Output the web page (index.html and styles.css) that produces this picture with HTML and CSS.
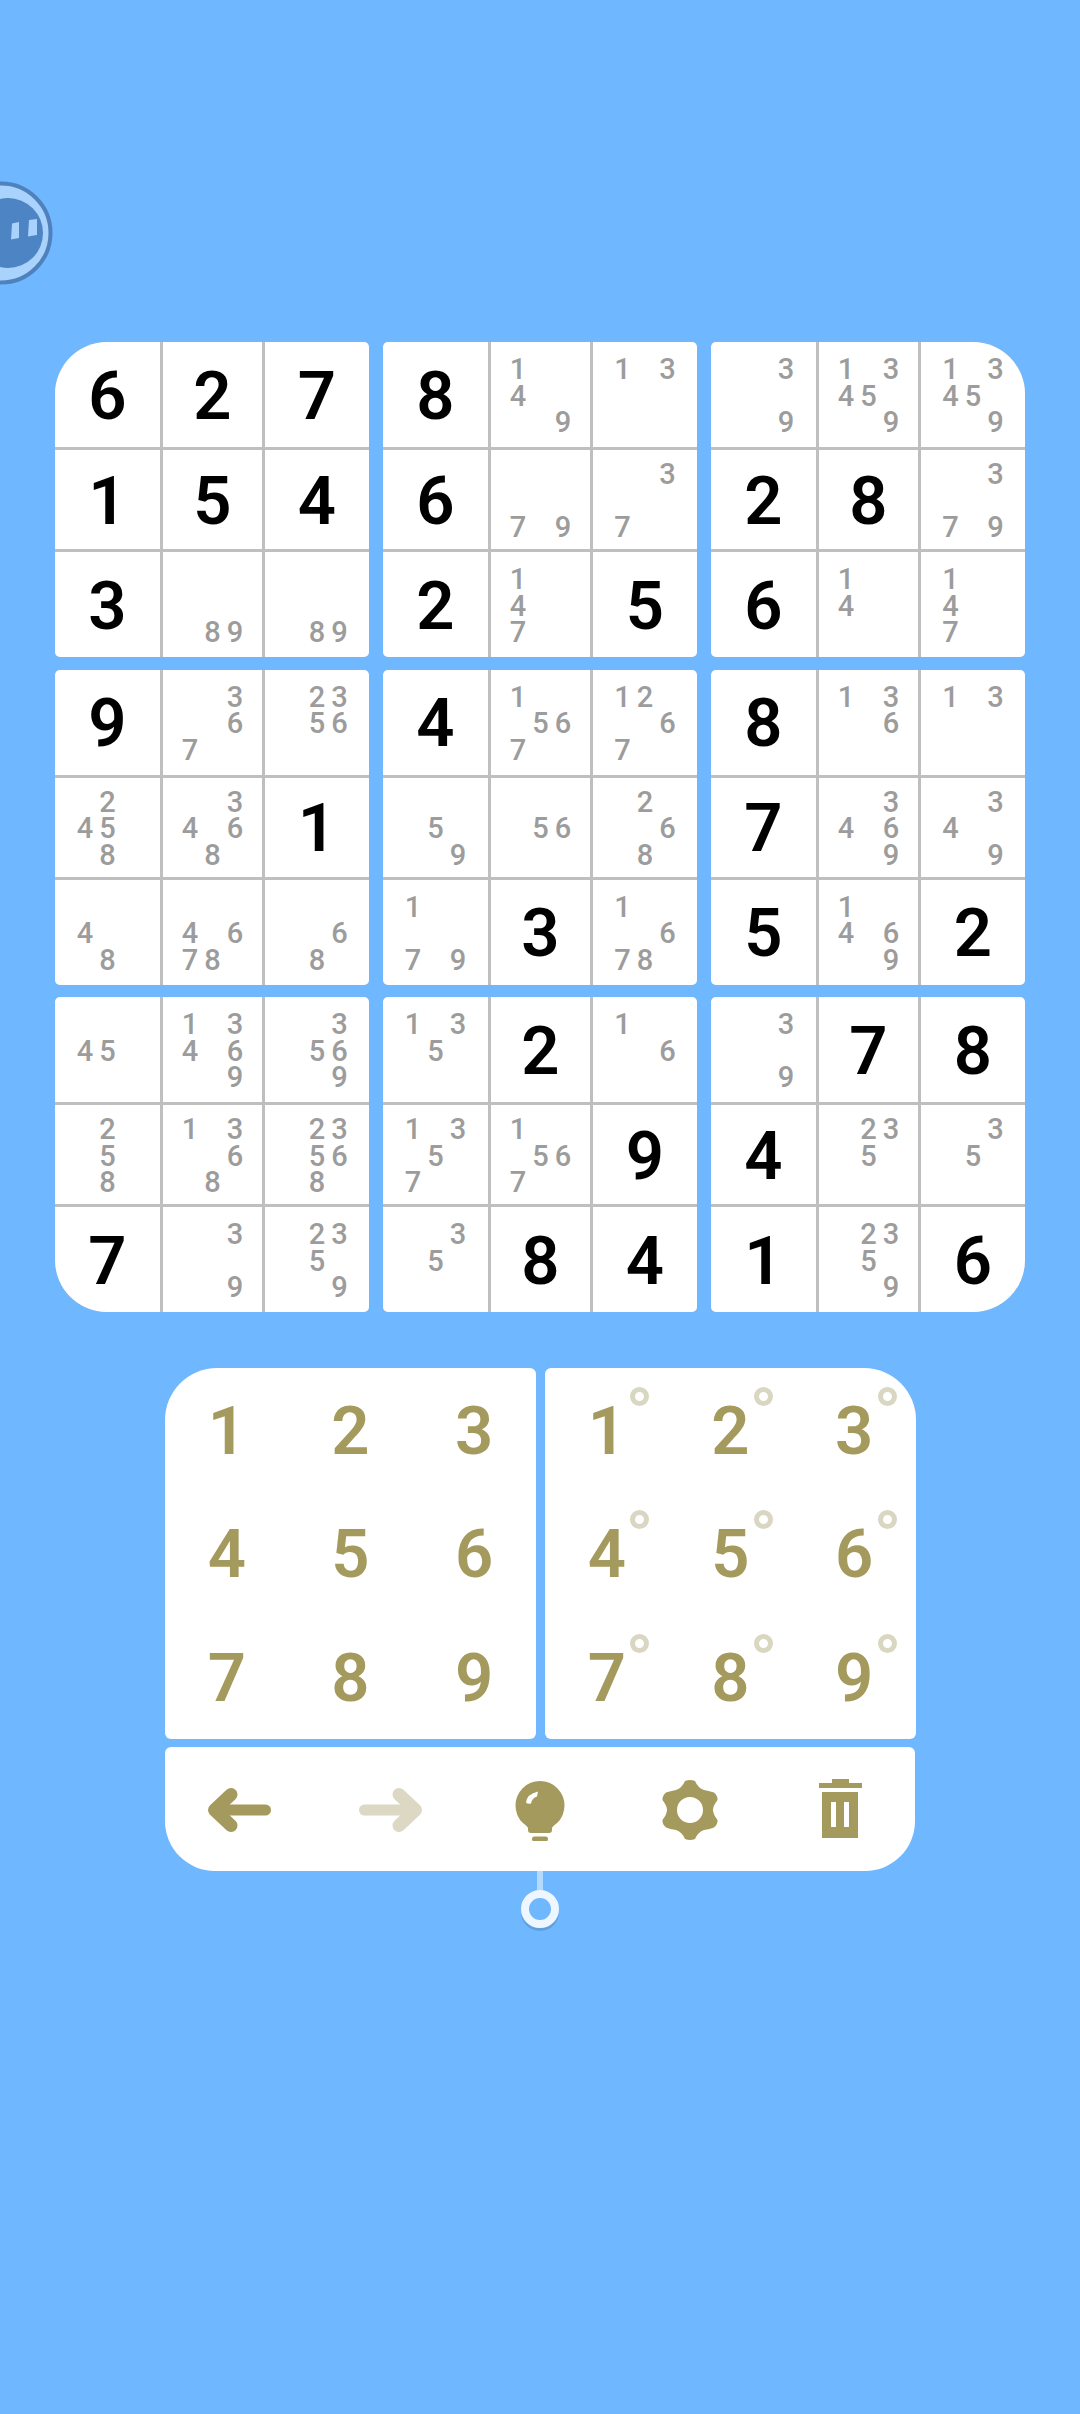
FILE: index.html
```html
<!DOCTYPE html>
<html lang="en">
<head>
<meta charset="utf-8">
<title>Sudoku</title>
<link rel="stylesheet" href="styles.css">
</head>
<body>
<svg class="bubble" viewBox="0 0 56 110" aria-hidden="true">
  <circle cx="1" cy="53" r="49.5" fill="#a9d3fc" stroke="#4f82bd" stroke-width="4"/>
  <ellipse cx="8" cy="53" rx="35" ry="35" fill="#4d84c4"/>
  <path d="M12 43.500L19 42V58L11 59.500Z" fill="#a9d3fc"/>
  <path d="M29 40L37 39V55L28 56.500Z" fill="#a9d3fc"/>
</svg>
<main class="board">
  <section class="block corner-tl">
    <div class="cell big">6</div><div class="cell big">2</div><div class="cell big">7</div>
    <div class="cell big">1</div><div class="cell big">5</div><div class="cell big">4</div>
    <div class="cell big">3</div>
    <div class="cell"><i class="n8">8</i><i class="n9">9</i></div>
    <div class="cell"><i class="n8">8</i><i class="n9">9</i></div>
  </section>
  <section class="block">
    <div class="cell big">8</div>
    <div class="cell"><i class="n1">1</i><i class="n4">4</i><i class="n9">9</i></div>
    <div class="cell"><i class="n1">1</i><i class="n3">3</i></div>
    <div class="cell big">6</div>
    <div class="cell"><i class="n7">7</i><i class="n9">9</i></div>
    <div class="cell"><i class="n3">3</i><i class="n7">7</i></div>
    <div class="cell big">2</div>
    <div class="cell"><i class="n1">1</i><i class="n4">4</i><i class="n7">7</i></div>
    <div class="cell big">5</div>
  </section>
  <section class="block corner-tr">
    <div class="cell"><i class="n3">3</i><i class="n9">9</i></div>
    <div class="cell"><i class="n1">1</i><i class="n3">3</i><i class="n4">4</i><i class="n5">5</i><i class="n9">9</i></div>
    <div class="cell"><i class="n1">1</i><i class="n3">3</i><i class="n4">4</i><i class="n5">5</i><i class="n9">9</i></div>
    <div class="cell big">2</div>
    <div class="cell big">8</div>
    <div class="cell"><i class="n3">3</i><i class="n7">7</i><i class="n9">9</i></div>
    <div class="cell big">6</div>
    <div class="cell"><i class="n1">1</i><i class="n4">4</i></div>
    <div class="cell"><i class="n1">1</i><i class="n4">4</i><i class="n7">7</i></div>
  </section>
  <section class="block">
    <div class="cell big">9</div>
    <div class="cell"><i class="n3">3</i><i class="n6">6</i><i class="n7">7</i></div>
    <div class="cell"><i class="n2">2</i><i class="n3">3</i><i class="n5">5</i><i class="n6">6</i></div>
    <div class="cell"><i class="n2">2</i><i class="n4">4</i><i class="n5">5</i><i class="n8">8</i></div>
    <div class="cell"><i class="n3">3</i><i class="n4">4</i><i class="n6">6</i><i class="n8">8</i></div>
    <div class="cell big">1</div>
    <div class="cell"><i class="n4">4</i><i class="n8">8</i></div>
    <div class="cell"><i class="n4">4</i><i class="n6">6</i><i class="n7">7</i><i class="n8">8</i></div>
    <div class="cell"><i class="n6">6</i><i class="n8">8</i></div>
  </section>
  <section class="block">
    <div class="cell big">4</div>
    <div class="cell"><i class="n1">1</i><i class="n5">5</i><i class="n6">6</i><i class="n7">7</i></div>
    <div class="cell"><i class="n1">1</i><i class="n2">2</i><i class="n6">6</i><i class="n7">7</i></div>
    <div class="cell"><i class="n5">5</i><i class="n9">9</i></div>
    <div class="cell"><i class="n5">5</i><i class="n6">6</i></div>
    <div class="cell"><i class="n2">2</i><i class="n6">6</i><i class="n8">8</i></div>
    <div class="cell"><i class="n1">1</i><i class="n7">7</i><i class="n9">9</i></div>
    <div class="cell big">3</div>
    <div class="cell"><i class="n1">1</i><i class="n6">6</i><i class="n7">7</i><i class="n8">8</i></div>
  </section>
  <section class="block">
    <div class="cell big">8</div>
    <div class="cell"><i class="n1">1</i><i class="n3">3</i><i class="n6">6</i></div>
    <div class="cell"><i class="n1">1</i><i class="n3">3</i></div>
    <div class="cell big">7</div>
    <div class="cell"><i class="n3">3</i><i class="n4">4</i><i class="n6">6</i><i class="n9">9</i></div>
    <div class="cell"><i class="n3">3</i><i class="n4">4</i><i class="n9">9</i></div>
    <div class="cell big">5</div>
    <div class="cell"><i class="n1">1</i><i class="n4">4</i><i class="n6">6</i><i class="n9">9</i></div>
    <div class="cell big">2</div>
  </section>
  <section class="block corner-bl">
    <div class="cell"><i class="n4">4</i><i class="n5">5</i></div>
    <div class="cell"><i class="n1">1</i><i class="n3">3</i><i class="n4">4</i><i class="n6">6</i><i class="n9">9</i></div>
    <div class="cell"><i class="n3">3</i><i class="n5">5</i><i class="n6">6</i><i class="n9">9</i></div>
    <div class="cell"><i class="n2">2</i><i class="n5">5</i><i class="n8">8</i></div>
    <div class="cell"><i class="n1">1</i><i class="n3">3</i><i class="n6">6</i><i class="n8">8</i></div>
    <div class="cell"><i class="n2">2</i><i class="n3">3</i><i class="n5">5</i><i class="n6">6</i><i class="n8">8</i></div>
    <div class="cell big">7</div>
    <div class="cell"><i class="n3">3</i><i class="n9">9</i></div>
    <div class="cell"><i class="n2">2</i><i class="n3">3</i><i class="n5">5</i><i class="n9">9</i></div>
  </section>
  <section class="block">
    <div class="cell"><i class="n1">1</i><i class="n3">3</i><i class="n5">5</i></div>
    <div class="cell big">2</div>
    <div class="cell"><i class="n1">1</i><i class="n6">6</i></div>
    <div class="cell"><i class="n1">1</i><i class="n3">3</i><i class="n5">5</i><i class="n7">7</i></div>
    <div class="cell"><i class="n1">1</i><i class="n5">5</i><i class="n6">6</i><i class="n7">7</i></div>
    <div class="cell big">9</div>
    <div class="cell"><i class="n3">3</i><i class="n5">5</i></div>
    <div class="cell big">8</div>
    <div class="cell big">4</div>
  </section>
  <section class="block corner-br">
    <div class="cell"><i class="n3">3</i><i class="n9">9</i></div>
    <div class="cell big">7</div>
    <div class="cell big">8</div>
    <div class="cell big">4</div>
    <div class="cell"><i class="n2">2</i><i class="n3">3</i><i class="n5">5</i></div>
    <div class="cell"><i class="n3">3</i><i class="n5">5</i></div>
    <div class="cell big">1</div>
    <div class="cell"><i class="n2">2</i><i class="n3">3</i><i class="n5">5</i><i class="n9">9</i></div>
    <div class="cell big">6</div>
  </section>
</main>
<div class="controls">
  <div class="pads">
    <div class="pad pad-left">
      <button class="key">1</button><button class="key">2</button><button class="key">3</button>
      <button class="key">4</button><button class="key">5</button><button class="key">6</button>
      <button class="key">7</button><button class="key">8</button><button class="key">9</button>
    </div>
    <div class="pad pad-right">
      <button class="key note">1</button><button class="key note">2</button><button class="key note">3</button>
      <button class="key note">4</button><button class="key note">5</button><button class="key note">6</button>
      <button class="key note">7</button><button class="key note">8</button><button class="key note">9</button>
    </div>
  </div>
  <div class="toolbar">
    <svg class="tool" viewBox="-32 -31 64 62" aria-label="Undo">
      <path d="M-9 -15.500L-25.500 0L-9 15.500" class="stroke arrow-head"/>
      <path d="M-25 0H25.500" class="stroke arrow-shaft"/>
    </svg>
    <svg class="tool faded" viewBox="-32 -31 64 62" aria-label="Redo">
      <path d="M9 -15.500L25.500 0L9 15.500" class="stroke arrow-head"/>
      <path d="M25 0H-25.500" class="stroke arrow-shaft"/>
    </svg>
    <svg class="tool" viewBox="-32 -31 64 62" aria-label="Hint">
      <circle cx="0" cy="-4.500" r="24.500" class="fill"/>
      <path d="M-20 10Q-13 15 -12 18V20Q-12 23 -9 23H9Q12 23 12 20V18Q13 15 20 10Z" class="fill"/>
      <rect x="-8" y="26.500" width="16" height="5" rx="2.500" class="fill"/>
      <path d="M-14 -7.500Q-13 -16 -2 -18.500L-3 -13.500Q-8 -12 -9 -6.500Q-12 -5.500 -14 -7.500Z" fill="#fff"/>
    </svg>
    <svg class="tool" viewBox="-32 -31 64 62" aria-label="Settings">
      <path fill-rule="evenodd" class="fill" d="M-5 -29Q0 -31 5 -29Q8 -22 14 -20Q20 -19 24 -17.500Q28 -14 27.500 -10Q23 -4 23 0Q23 4 27.500 10Q28 14 24 17.500Q20 19 14 20Q8 22 5 29Q0 31 -5 29Q-8 22 -14 20Q-20 19 -24 17.500Q-28 14 -27.500 10Q-23 4 -23 0Q-23 -4 -27.500 -10Q-28 -14 -24 -17.500Q-20 -19 -14 -20Q-8 -22 -5 -29ZM13 0A13 13 0 1 0 -13 0A13 13 0 1 0 13 0Z"/>
    </svg>
    <svg class="tool" viewBox="-32 -31 64 62" aria-label="Delete">
      <path class="fill" fill-rule="evenodd" d="M-8 -31H9V-27H22V-22H-21V-27H-8ZM-18 -18H18V28H-18ZM-9 -8V17H-4V-8ZM4 -8V17H9V-8Z"/>
    </svg>
  </div>
  <div class="tether"></div>
  <div class="pip"></div>
</div>
</body>
</html>
```
FILE: styles.css
```css
*, *::after { box-sizing: border-box; }
html, body { margin: 0; height: 2414px; }
body {
  position: relative;
  overflow: hidden;
  background: #6fb7ff;
  font-family: Roboto, "Liberation Sans", sans-serif;
  padding-top: 342px;
}
.bubble { position: absolute; left: 0; top: 180px; width: 56px; height: 110px; }

.board {
  display: grid;
  grid-template-columns: repeat(3, 314px);
  grid-auto-rows: 315px;
  column-gap: 14px;
  row-gap: 12.5px;
  margin-left: 55px;
}
.block {
  display: grid;
  grid-template-columns: 105px 99px 104px;
  grid-template-rows: 105px 99px 105px;
  gap: 3px;
  background: #bfbfbf;
  border-radius: 5px;
  overflow: hidden;
}
.corner-tl { border-top-left-radius: 52px; }
.corner-tr { border-top-right-radius: 52px; }
.corner-bl { border-bottom-left-radius: 52px; }
.corner-br { border-bottom-right-radius: 52px; }

.cell {
  background: #fff;
  display: grid;
  grid-template-columns: repeat(3, 22.500px);
  grid-template-rows: repeat(3, 26.500px);
  justify-content: center;
  align-content: center;
  padding-top: 3px;
}
.cell.big {
  display: flex;
  align-items: center;
  justify-content: center;
  color: #000;
  font-size: 67px;
  font-weight: 600;
  line-height: 1;
}
.cell i {
  font-style: normal;
  font-size: 29px;
  font-weight: 500;
  line-height: 26.500px;
  color: #9c9c9c;
  text-align: center;
}
.n1, .n2, .n3 { grid-row: 1; }
.n4, .n5, .n6 { grid-row: 2; }
.n7, .n8, .n9 { grid-row: 3; }
.n1, .n4, .n7 { grid-column: 1; }
.n2, .n5, .n8 { grid-column: 2; }
.n3, .n6, .n9 { grid-column: 3; }

.controls {
  width: 751px;
  margin: 56px 0 0 165px;
  display: flex;
  flex-direction: column;
  align-items: center;
}
.pads {
  display: grid;
  grid-template-columns: 371px 371px;
  column-gap: 9px;
}
.pad {
  display: grid;
  grid-template-columns: repeat(3, 1fr);
  grid-template-rows: repeat(3, 1fr);
  height: 371px;
  background: #fff;
  border-radius: 6px;
}
.pad-left { border-top-left-radius: 52px; }
.pad-right { border-top-right-radius: 52px; }
.key {
  position: relative;
  border: 0;
  padding: 3px 0 0;
  background: none;
  color: #a59a5d;
  font-family: inherit;
  font-size: 67px;
  font-weight: 600;
  line-height: 1;
}
.note::after {
  content: "";
  position: absolute;
  left: calc(50% + 23.500px);
  top: calc(50% - 43px);
  width: 19px;
  height: 19px;
  border: 5px solid #d9d6c2;
  border-radius: 50%;
}
.toolbar {
  align-self: stretch;
  margin: 8px 1px 0 0;
  height: 124px;
  padding-top: 2px;
  display: grid;
  grid-template-columns: repeat(5, 1fr);
  align-items: center;
  justify-items: center;
  background: #fff;
  border-radius: 6px 6px 50px 50px;
}
.tool { width: 64px; height: 62px; display: block; }
.fill { fill: #a59a5d; }
.stroke { fill: none; stroke: #a59a5d; stroke-linecap: round; stroke-linejoin: round; }
.arrow-head { stroke-width: 13; }
.arrow-shaft { stroke-width: 11; }
.faded .stroke { stroke: #dcd8c4; }
.tether { width: 6px; height: 19px; margin-right: 1px; background: #b4dafe; }
.pip {
  width: 38px;
  height: 38px;
  margin: 0 1px 0 0;
  border: 8px solid #eef6ff;
  border-radius: 50%;
  box-shadow: 0 3px 0 #5e9fe0;
}
```
